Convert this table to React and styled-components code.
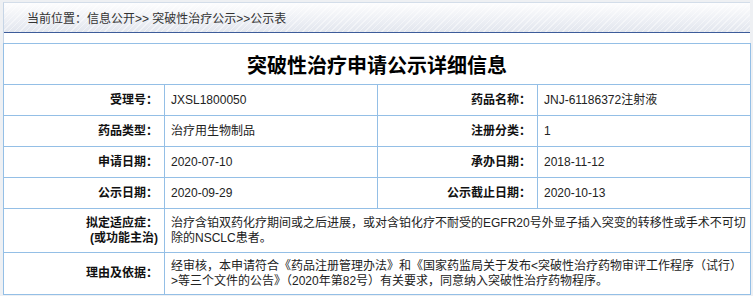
import React from 'react'
import styled, { createGlobalStyle } from 'styled-components'

const GlobalStyle = createGlobalStyle`
    body {
        margin: 0;
        background-color: #eef0f3;
        font-family: "Liberation Sans", "Noto Sans CJK SC", sans-serif;
    }
`

const Page = styled.div`
    padding: 2px 0 0 3px;
    width: 750px;
    height: 294px;
    overflow: hidden;
`

const Panel = styled.div`
    width: 746px;
    background-color: #fff;
    border-left: 1px solid #c6d5e6;
    border-top: 1px solid #d3dde9;
`

const Crumbs = styled.div`
    height: 29px;
    display: flex;
    align-items: center;
    padding-left: 23px;
    font-size: 12px;
    color: #333;
    border-bottom: 1px solid #3d5c9a;
    background:
        repeating-linear-gradient(135deg, rgba(255,255,255,0) 0 3px, rgba(255,255,255,0.45) 3px 4px),
        linear-gradient(#fdfdfe, #e2e6ee);
`

const Grid = styled.div`
    margin: 10px 0 0 -1px;
    width: 746px;
    display: grid;
    grid-template-columns: 160px 212px 159px 212px;
    gap: 1px;
    padding: 1px;
    background-color: #94bfe6;
`

const Title = styled.div`
    grid-column: 1 / -1;
    height: 40px;
    background-color: #fff;
    display: flex;
    align-items: center;
    justify-content: center;
    font-size: 20px;
    font-weight: 700;
    color: #000;
`

const Label = styled.div`
    background-color: #fff;
    min-height: ${props => props.h}px;
    display: flex;
    align-items: center;
    justify-content: flex-end;
    text-align: right;
    padding-right: 6px;
    font-size: 12px;
    font-weight: 700;
    color: #111;
    line-height: 15px;
`

const Value = styled.div`
    background-color: #fff;
    min-height: ${props => props.h}px;
    grid-column: ${props => props.wide ? '2 / -1' : 'auto'};
    display: flex;
    flex-direction: column;
    justify-content: center;
    padding-left: 6px;
    font-size: 12px;
    color: #222;
    line-height: 15px;
`

const pairs = [
    ['受理号：', 'JXSL1800050', '药品名称：', 'JNJ-61186372注射液'],
    ['药品类型：', '治疗用生物制品', '注册分类：', '1'],
    ['申请日期：', '2020-07-10', '承办日期：', '2018-11-12'],
    ['公示日期：', '2020-09-29', '公示截止日期：', '2020-10-13'],
]

const App = () => {
    return (
        <Page>
            <GlobalStyle />
            <Panel>
                <Crumbs>当前位置：信息公开&gt;&gt; 突破性治疗公示&gt;&gt;公示表</Crumbs>
                <Grid>
                    <Title>突破性治疗申请公示详细信息</Title>
                    {pairs.map(row => (
                        <React.Fragment key={row[0]}>
                            <Label h={30}>{row[0]}</Label>
                            <Value h={30}>{row[1]}</Value>
                            <Label h={30}>{row[2]}</Label>
                            <Value h={30}>{row[3]}</Value>
                        </React.Fragment>
                    ))}
                    <Label h={43}>拟定适应症：<br />(或功能主治)</Label>
                    <Value h={43} wide>
                        <span>治疗含铂双药化疗期间或之后进展，或对含铂化疗不耐受的EGFR20号外显子插入突变的转移性或手术不可切</span>
                        <span>除的NSCLC患者。</span>
                    </Value>
                    <Label h={41}>理由及依据：</Label>
                    <Value h={41} wide>
                        <span>经审核，本申请符合《药品注册管理办法》和《国家药监局关于发布&lt;突破性治疗药物审评工作程序（试行）</span>
                        <span>&gt;等三个文件的公告》（2020年第82号）有关要求，同意纳入突破性治疗药物程序。</span>
                    </Value>
                </Grid>
            </Panel>
        </Page>
    )
}

export default App
